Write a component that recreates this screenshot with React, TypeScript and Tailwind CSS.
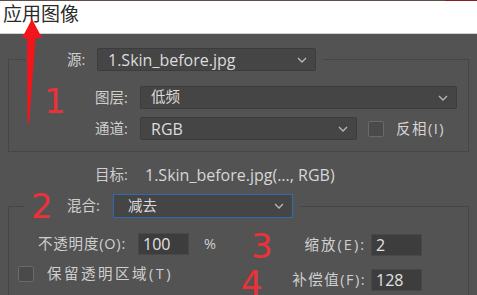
import React from 'react';

const font = { fontFamily: '"Open Sans", "Noto Sans CJK SC", sans-serif' };

const Chevron = () => (
    <svg width="10" height="6" viewBox="0 0 10 6" className="shrink-0">
        <path d="M1 1 L5 5 L9 1" fill="none" stroke="#b8b8b8" strokeWidth="1.3" />
    </svg>
);

const Select = ({ value, className, latin }: { value: string; className: string; latin?: boolean }) => (
    <div className={`flex items-center justify-between h-[23px] pl-[10px] pr-[8px] bg-[#454545] border border-[#3c3c3c] rounded-[2px] text-[#dcdcdc] ${className}`}>
        <span className={latin ? 'leading-none text-[16px]' : 'leading-none'}>{value}</span>
        <Chevron />
    </div>
);

const Field = ({ value }: { value: string }) => (
    <div className="flex items-center h-[22px] w-[51px] pl-[4px] bg-[#3d3d3d] border border-[#484848] text-[16px] text-[#e2e2e2] leading-none">
        {value}
    </div>
);

const Box = () => <div className="w-[16px] h-[16px] border border-[#6a6a6a] bg-[#4a4a4a] rounded-[2px] shrink-0" />;

const Mark = ({ n, className }: { n: string; className: string }) => (
    <span className={`absolute text-[34px] leading-none text-[#ec3139] ${className}`} style={{ fontFamily: '"DejaVu Sans", sans-serif' }}>{n}</span>
);

export default function App() {
    return (
        <div className="relative w-[477px] h-[295px] overflow-hidden bg-[#535353] text-[14.5px] text-[#cfcfcf]" style={font}>
            <div className="flex h-px">
                <div className="flex-1 bg-[#5e4d47]" />
                <div className="w-[32px] bg-[#8a1d1d]" />
            </div>
            <div className="h-[33px] bg-white border-b border-[#d2d2d2] pl-[3px] pt-[1px]">
                <span className="text-[19px] leading-[22px] text-[#2a2a2a]" style={{ fontFamily: '"Noto Sans CJK SC", sans-serif' }}>应用图像</span>
            </div>

            <div className="px-[8px] pt-[14px]">
                <fieldset className="border border-[#464646] px-0 pt-[15px] pb-[11px]">
                    <legend className="ml-[17px] pl-[41px] pr-[7px]">
                        <div className="flex items-center">
                            <span className="w-[30px]">源:</span>
                            <Select value="1.Skin_before.jpg" className="w-[219px]" latin />
                        </div>
                    </legend>
                    <div className="flex flex-col gap-[8px] pl-[86px] pr-[11px]">
                        <div className="flex items-center">
                            <span className="w-[45px]">图层:</span>
                            <Select value="低频" className="flex-1" />
                        </div>
                        <div className="flex items-center">
                            <span className="w-[45px]">通道:</span>
                            <Select value="RGB" className="w-[217px]" latin />
                            <div className="ml-[11px] flex items-center gap-[12px]">
                                <Box />
                                <span className="text-[#d4d4d4] tracking-[1.5px]">反相(I)</span>
                            </div>
                        </div>
                    </div>
                </fieldset>

                <div className="flex items-center h-[22px] mt-[12px] pl-[87px]">
                    <span className="w-[50px]">目标:</span>
                    <span className="text-[16px] text-[#d6d6d6]">1.Skin_before.jpg(..., RGB)</span>
                </div>

                <fieldset className="mt-[8px] border border-[#464646] px-0 pt-[15px] pb-[20px]">
                    <legend className="ml-[16px] pl-[42px] pr-[7px]">
                        <div className="flex items-center">
                            <span className="w-[46px]">混合:</span>
                            <div className="flex items-center justify-between h-[24px] w-[180px] pl-[14px] pr-[8px] bg-[#454545] border-[1.5px] border-[#2f6bb0] text-[#dcdcdc]">
                                <span className="leading-none">减去</span>
                                <Chevron />
                            </div>
                        </div>
                    </legend>
                    <div className="flex pl-[9px]">
                        <div className="flex flex-col w-[272px]">
                            <div className="flex items-center h-[22px] ml-[20px]">
                                <span className="w-[100px] tracking-[0.8px]">不透明度(O):</span>
                                <Field value="100" />
                                <span className="ml-[15px]">%</span>
                            </div>
                            <div className="flex items-center gap-[13px] mt-[8px]">
                                <Box />
                                <span className="text-[#d0d0d0] tracking-[2.5px]">保留透明区域(T)</span>
                            </div>
                        </div>
                        <div className="flex flex-col w-[132px] gap-[13px] pt-[1px]">
                            <div className="flex items-center justify-end gap-[5px]">
                                <span className="tracking-[2px]">缩放(E):</span>
                                <Field value="2" />
                            </div>
                            <div className="flex items-center justify-end gap-[5px]">
                                <span className="tracking-[1.5px]">补偿值(F):</span>
                                <Field value="128" />
                            </div>
                        </div>
                    </div>
                </fieldset>
            </div>

            <svg className="absolute left-0 top-0" width="60" height="130" viewBox="0 0 60 130">
                <path d="M32 19 L42 38 L35.5 38 L29 124 L27.5 124 L27 38 L22 38 Z" fill="#f2161c" />
            </svg>
            <Mark n="1" className="left-[44px] top-[84px]" />
            <Mark n="2" className="left-[31px] top-[189px]" />
            <Mark n="3" className="left-[251px] top-[229px]" />
            <Mark n="4" className="left-[241px] top-[266px]" />
        </div>
    );
}
